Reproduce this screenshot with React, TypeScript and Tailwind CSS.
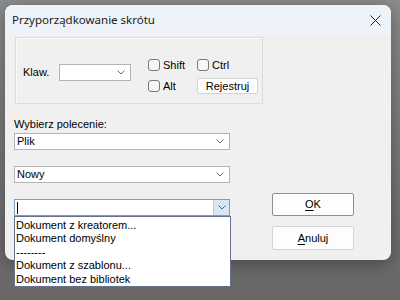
import React from 'react';

const Chevron: React.FC<{ color?: string }> = ({ color = '#6b6b6b' }) => (
  <svg width="8" height="5" viewBox="0 0 8 5" className="shrink-0">
    <polyline points="0.5,0.5 4,4 7.5,0.5" fill="none" stroke={color} strokeWidth="1" />
  </svg>
);

interface IComboProps {
  value?: string;
  width: string;
  active?: boolean;
}

const Combo: React.FC<IComboProps> = ({ value = '', width, active }) => {
  if (active) {
    return (
      <div className={`${width} h-[17px] flex border border-[#7f9db9] bg-white`}>
        <div className="flex-1 flex items-center pl-[2px]">
          <span className="w-px h-[12px] bg-black" />
        </div>
        <div className="w-[16px] h-full flex items-center justify-center bg-[#dbe6f4] border-l border-[#b6c9e3]">
          <Chevron color="#4d6185" />
        </div>
      </div>
    );
  }
  return (
    <div className={`${width} h-[17px] flex items-center justify-between border border-[#b4b4b4] bg-white pl-[2px] pr-[5px]`}>
      <span className="leading-none">{value}</span>
      <Chevron />
    </div>
  );
};

const Check: React.FC<{ label: string }> = ({ label }) => (
  <div className="flex items-center gap-[3px]">
    <span className="w-[12px] h-[12px] rounded-[3px] border border-[#7a7a7a] bg-[#f6f6f6]" />
    <span className="leading-none">{label}</span>
  </div>
);

const Underlined: React.FC<{ first: string; rest: string }> = ({ first, rest }) => (
  <span>
    <span className="underline underline-offset-[2px]">{first}</span>
    {rest}
  </span>
);

export default function App() {
  return (
    <div className="w-[400px] h-[300px] overflow-hidden pl-[5px] pt-[5px] bg-gradient-to-b from-[#8c8c8c] to-[#676767] font-['Liberation_Sans',Arial,sans-serif] text-[11px] text-black">
      <div className="w-[386px] h-[255px] rounded-[8px] bg-[#f0f0f0] flex flex-col shadow-[0_4px_18px_rgba(0,0,0,0.35)]">
        {/* title bar */}
        <div className="h-[30px] shrink-0 rounded-t-[8px] bg-[#eef3f9] flex items-center pl-[7px] pr-[10px]">
          <span className="font-['Noto_Sans',sans-serif] text-[11.5px] text-[#1b1b1b]">Przyporządkowanie skrótu</span>
          <svg width="11" height="11" viewBox="0 0 11 11" className="ml-auto">
            <path d="M0.5 0.5 L10.5 10.5 M10.5 0.5 L0.5 10.5" stroke="#222" strokeWidth="1" />
          </svg>
        </div>

        <div className="flex-1 flex">
          {/* left column */}
          <div className="w-[257px] pl-[9px] flex flex-col">
            <div className="ml-[1px] mt-[2px] w-[248px] h-[67px] border border-[#dcdcdc] shadow-[inset_1px_1px_0_#fafafa] flex items-start pl-[7px] pt-[21px]">
              <div className="flex items-center mt-[5px]">
                <span className="w-[36px]">Klaw.</span>
                <Combo width="w-[72px]" />
              </div>
              <div className="ml-[17px] grid grid-cols-[49px_auto] gap-y-[7px] items-center">
                <Check label="Shift" />
                <Check label="Ctrl" />
                <Check label="Alt" />
                <div className="w-[61px] h-[16px] flex items-center justify-center bg-[#fdfdfd] border border-[#d3d3d3] rounded-[2px]">
                  Rejestruj
                </div>
              </div>
            </div>

            <span className="mt-[14px] leading-[13px]">Wybierz polecenie:</span>
            <div className="mt-[2px]">
              <Combo value="Plik" width="w-[216px]" />
            </div>
            <div className="mt-[16px]">
              <Combo value="Nowy" width="w-[216px]" />
            </div>
            <div className="mt-[16px] relative">
              <Combo width="w-[216px]" active />
              <div className="absolute top-full left-0 w-[217px] bg-white border border-[#66728c] pt-[2px] px-[1px] leading-[13.4px] z-10">
                <div>Dokument z kreatorem...</div>
                <div>Dokument domyślny</div>
                <div>--------</div>
                <div>Dokument z szablonu...</div>
                <div>Dokument bez bibliotek</div>
              </div>
            </div>
          </div>

          {/* right column */}
          <div className="pl-[10px] pt-[158px] flex flex-col gap-[10px]">
            <div className="w-[82px] h-[23px] flex items-center justify-center bg-[#fdfdfd] border border-[#8f8f8f] rounded-[2px]">
              <Underlined first="O" rest="K" />
            </div>
            <div className="w-[82px] h-[24px] flex items-center justify-center bg-[#fdfdfd] border border-[#d5d5d5] rounded-[2px]">
              <Underlined first="A" rest="nuluj" />
            </div>
          </div>
        </div>
      </div>
    </div>
  );
}
